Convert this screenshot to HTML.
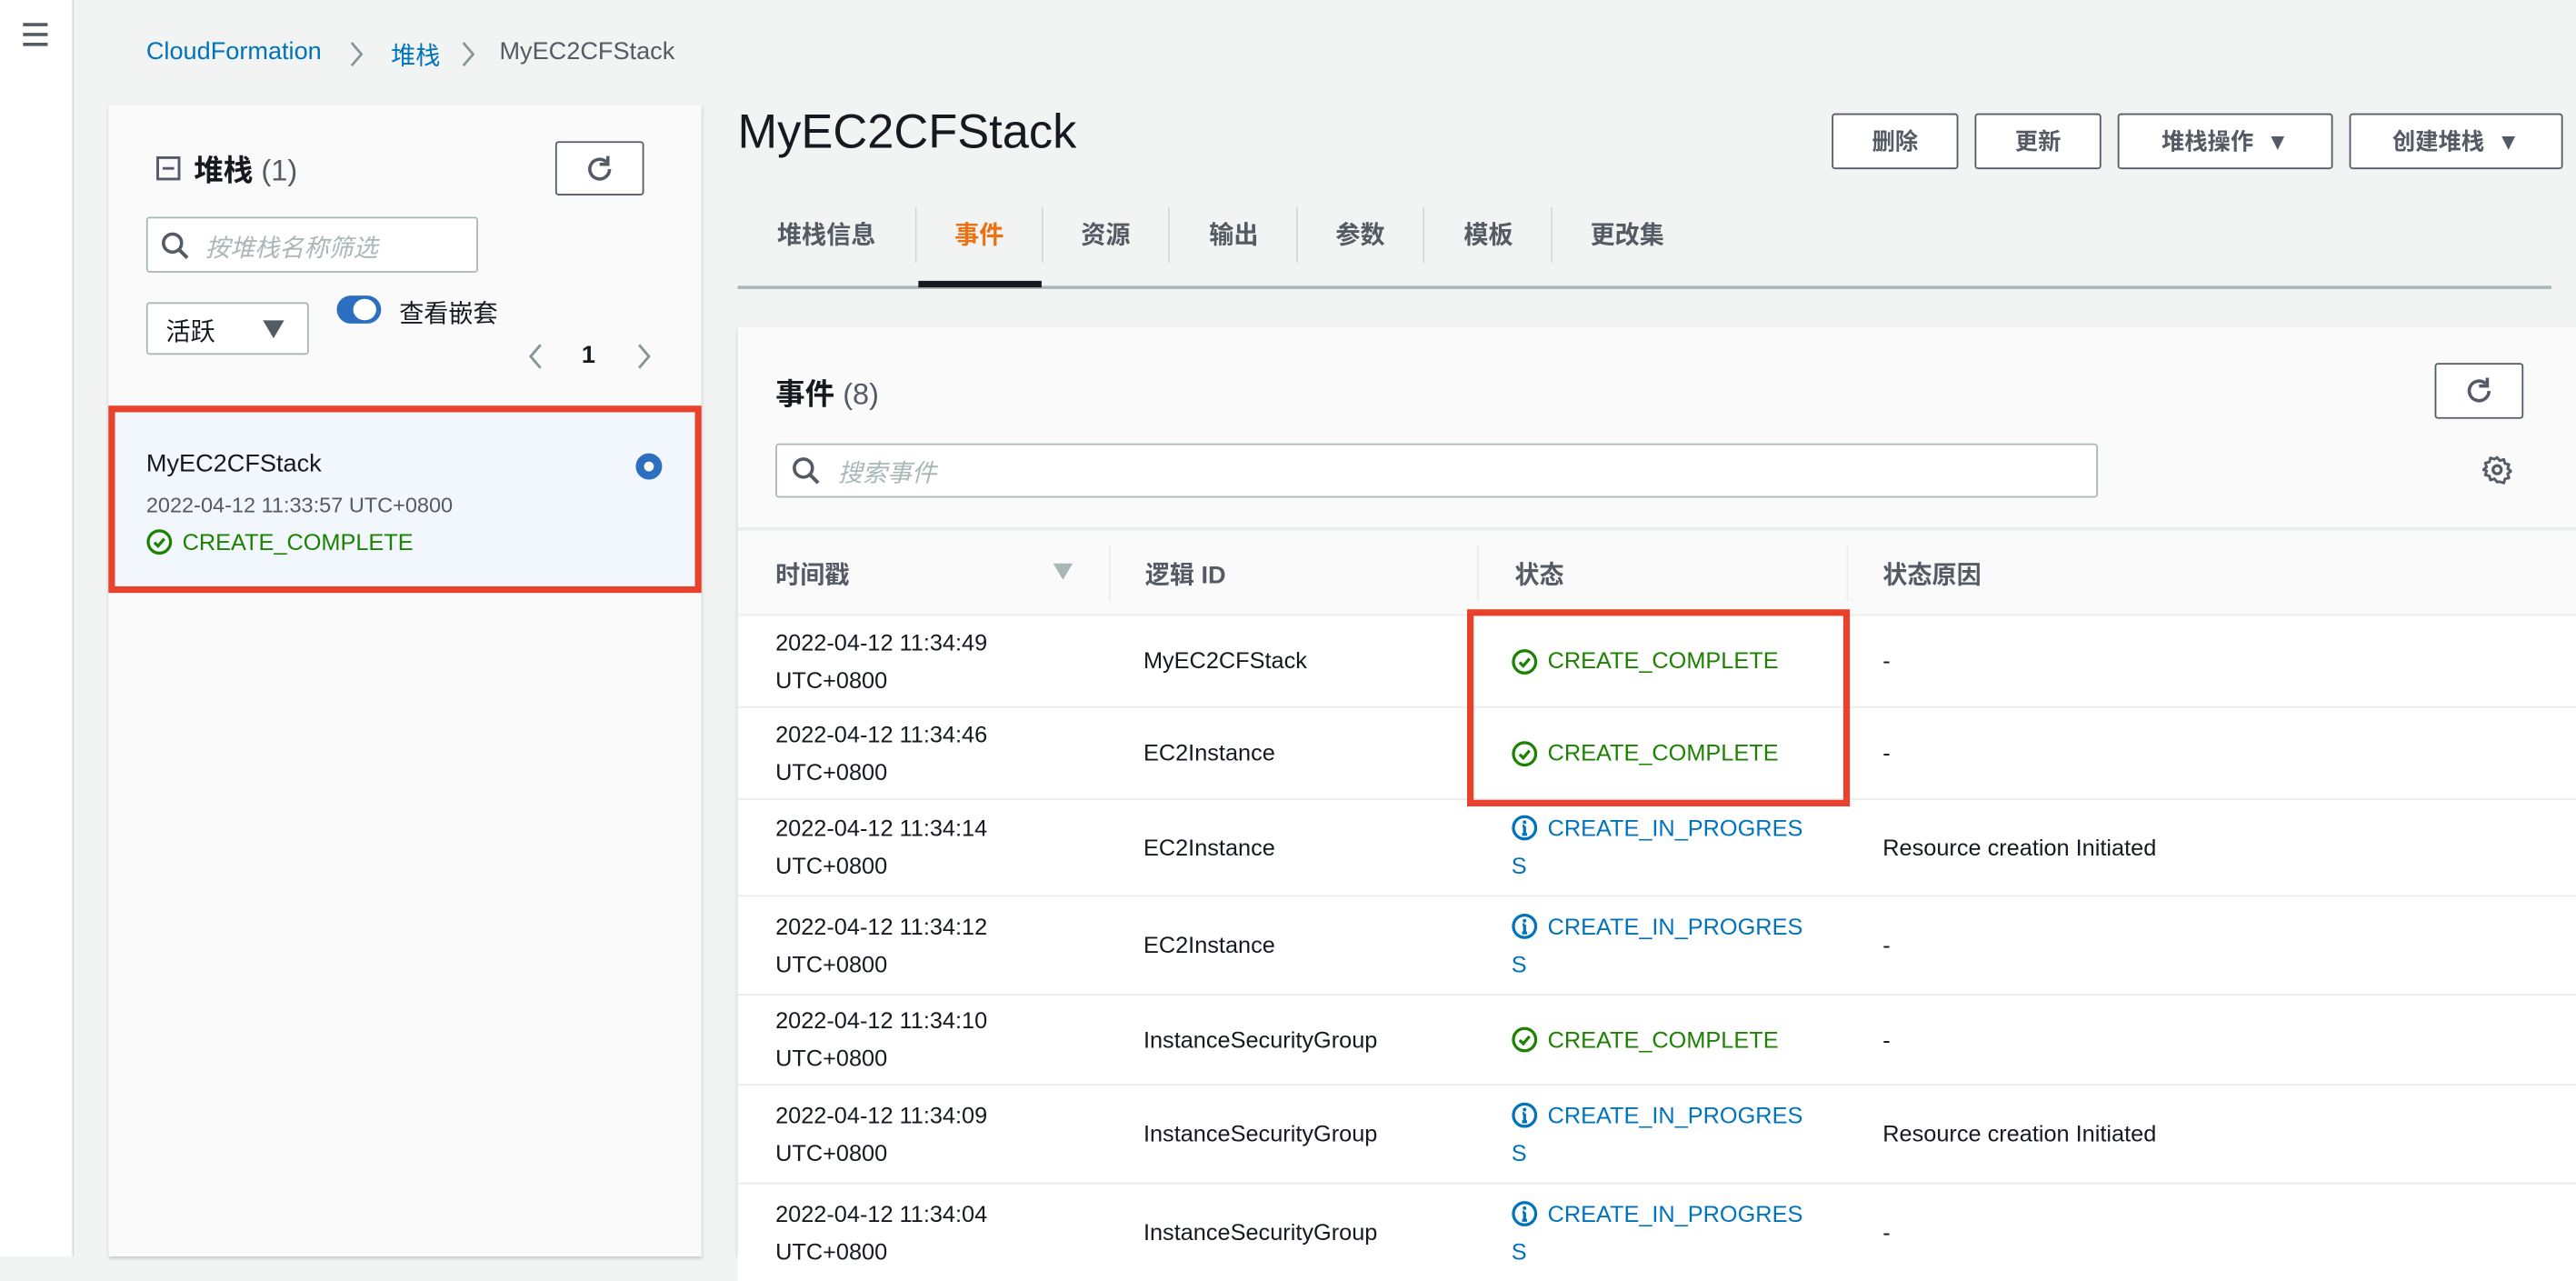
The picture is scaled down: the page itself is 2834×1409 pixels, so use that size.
<!DOCTYPE html>
<html><head><meta charset="utf-8">
<style>
*{box-sizing:border-box;margin:0;padding:0}
html,body{width:2834px;height:1382px;overflow:hidden;background:#f2f3f3}
#w{position:absolute;left:0;top:0;width:1568px;height:765px;transform:scale(1.8074,1.8065);transform-origin:0 0;font-family:"Liberation Sans","Noto Sans CJK SC",sans-serif;color:#16191f;background:#f2f3f3}
.a{position:absolute;white-space:nowrap}
.btn{position:absolute;border:1px solid #545b64;border-radius:2px;background:#fff;font-weight:bold;font-size:14px;color:#545b64;display:flex;align-items:center;justify-content:center}
.tab{position:absolute;top:132px;font-size:15px;font-weight:bold;color:#545b64}
.sep{position:absolute;top:126px;width:1px;height:34px;background:#d5dbdb}
.row{position:absolute;left:449px;width:1119px;background:#fff;border-top:1px solid #eaeded}
.c{position:absolute;top:0;bottom:0;display:flex;align-items:center;font-size:14px;line-height:23px;white-space:nowrap}
.g{color:#1d8102}.b{color:#0073bb}
.ic{width:16px;height:16px;margin-right:6px;flex:none}
</style></head><body><div id="w">
<div class="a" style="left:0;top:0;width:45px;height:765px;background:#fff;border-right:1px solid #d5dbdb"></div>
<svg class="a" style="left:13px;top:13px" width="18" height="16"><path d="M1 2h15M1 8h15M1 14h15" stroke="#545b64" stroke-width="2"/></svg>
<div class="a" style="left:89px;top:23px;font-size:15px;color:#0073bb">CloudFormation</div>
<svg class="a" style="left:212px;top:25px" width="10" height="16"><path d="M2 1l6 7-6 7" fill="none" stroke="#879596" stroke-width="1.5"/></svg>
<div class="a" style="left:238px;top:23px;font-size:15px;color:#0073bb">堆栈</div>
<svg class="a" style="left:280px;top:25px" width="10" height="16"><path d="M2 1l6 7-6 7" fill="none" stroke="#879596" stroke-width="1.5"/></svg>
<div class="a" style="left:304px;top:23px;font-size:15px;color:#545b64">MyEC2CFStack</div>

<div class="a" style="left:66px;top:64px;width:361px;height:701px;background:#fafafa;box-shadow:0 1px 2px rgba(0,0,0,.2)"></div>
<svg class="a" style="left:95px;top:95px" width="15" height="15"><rect x="1" y="1" width="13" height="13" fill="none" stroke="#545b64" stroke-width="1.6"/><path d="M4 7.5h7" stroke="#545b64" stroke-width="1.6"/></svg>
<div class="a" style="left:118px;top:90px;font-size:18px;font-weight:bold">堆栈 <span style="font-weight:normal;color:#545b64">(1)</span></div>
<div class="btn" style="left:338px;top:86px;width:54px;height:33px"><svg width="20" height="20" viewBox="0 0 20 20"><path d="M16 10a6 6 0 1 1-2-4.5" fill="none" stroke="#545b64" stroke-width="2"/><path d="M15 2v5h-5" fill="none" stroke="#545b64" stroke-width="2"/></svg></div>
<div class="a" style="left:89px;top:132px;width:202px;height:34px;border:1px solid #aab7b8;border-radius:2px;background:#fff"></div>
<svg class="a" style="left:98px;top:141px" width="18" height="18"><circle cx="7" cy="7" r="5.5" fill="none" stroke="#545b64" stroke-width="2"/><path d="M11 11l5 5" stroke="#545b64" stroke-width="2.2"/></svg>
<div class="a" style="left:125px;top:140px;font-size:15px;color:#aab7b8;font-style:italic">按堆栈名称筛选</div>
<div class="a" style="left:89px;top:184px;width:99px;height:32px;border:1px solid #aab7b8;border-radius:2px;background:#fff"></div>
<div class="a" style="left:101px;top:191px;font-size:15px">活跃</div>
<svg class="a" style="left:160px;top:195px" width="13" height="11"><path d="M0 0h13L6.5 11z" fill="#545b64"/></svg>
<div class="a" style="left:205px;top:180px;width:27px;height:17px;border-radius:9px;background:#2c6fc1"></div>
<div class="a" style="left:215px;top:182px;width:14px;height:13px;border-radius:50%;background:#fff"></div>
<div class="a" style="left:243px;top:180px;font-size:15px">查看嵌套</div>
<svg class="a" style="left:320px;top:208px" width="12" height="18"><path d="M9 2L3 9l6 7" fill="none" stroke="#879596" stroke-width="1.6"/></svg>
<div class="a" style="left:354px;top:208px;font-size:15px;font-weight:bold">1</div>
<svg class="a" style="left:386px;top:208px" width="12" height="18"><path d="M3 2l6 7-6 7" fill="none" stroke="#879596" stroke-width="1.6"/></svg>

<div class="a" style="left:66px;top:247px;width:361px;height:114px;background:#f1f7fc;border:4px solid #e8412c"></div>
<div class="a" style="left:89px;top:274px;font-size:15px">MyEC2CFStack</div>
<div class="a" style="left:89px;top:300px;font-size:13px;color:#545b64">2022-04-12 11:33:57 UTC+0800</div>
<div class="a" style="left:89px;top:322px;font-size:14px;display:flex;align-items:center" ><svg class="ic" viewBox="0 0 16 16"><circle cx="8" cy="8" r="6.8" fill="none" stroke="#1d8102" stroke-width="1.8"/><path d="M5 8.3l2.2 2.2L11 6" fill="none" stroke="#1d8102" stroke-width="1.8"/></svg><span class="g">CREATE_COMPLETE</span></div>
<div class="a" style="left:387px;top:276px;width:16px;height:16px;border-radius:50%;border:5px solid #2c6fc1;background:#fff"></div>

<div class="a" style="left:449px;top:65px;font-size:29px">MyEC2CFStack</div>
<div class="btn" style="left:1115px;top:69px;width:77px;height:34px">删除</div>
<div class="btn" style="left:1202px;top:69px;width:77px;height:34px">更新</div>
<div class="btn" style="left:1289px;top:69px;width:131px;height:34px">堆栈操作&nbsp;&nbsp;▼</div>
<div class="btn" style="left:1430px;top:69px;width:130px;height:34px">创建堆栈&nbsp;&nbsp;▼</div>

<div class="tab" style="left:473px">堆栈信息</div><div class="sep" style="left:557px"></div>
<div class="tab" style="left:581px;color:#ec7211">事件</div><div class="sep" style="left:634px"></div>
<div class="tab" style="left:658px">资源</div><div class="sep" style="left:711px"></div>
<div class="tab" style="left:736px">输出</div><div class="sep" style="left:789px"></div>
<div class="tab" style="left:813px">参数</div><div class="sep" style="left:866px"></div>
<div class="tab" style="left:891px">模板</div><div class="sep" style="left:944px"></div>
<div class="tab" style="left:968px">更改集</div>
<div class="a" style="left:449px;top:174px;width:1104px;height:2px;background:#aab7b8"></div>
<div class="a" style="left:559px;top:171px;width:75px;height:4px;background:#16191f"></div>

<div class="a" style="left:449px;top:199px;width:1119px;height:566px;background:#fafafa;box-shadow:0 1px 2px rgba(0,0,0,.2)"></div>
<div class="a" style="left:472px;top:226px;font-size:18px;font-weight:bold">事件 <span style="font-weight:normal;color:#545b64">(8)</span></div>
<div class="btn" style="left:1482px;top:221px;width:54px;height:34px"><svg width="20" height="20" viewBox="0 0 20 20"><path d="M16 10a6 6 0 1 1-2-4.5" fill="none" stroke="#545b64" stroke-width="2"/><path d="M15 2v5h-5" fill="none" stroke="#545b64" stroke-width="2"/></svg></div>
<div class="a" style="left:472px;top:270px;width:805px;height:33px;border:1px solid #aab7b8;border-radius:2px;background:#fff"></div>
<svg class="a" style="left:482px;top:278px" width="18" height="18"><circle cx="7" cy="7" r="5.5" fill="none" stroke="#545b64" stroke-width="2"/><path d="M11 11l5 5" stroke="#545b64" stroke-width="2.2"/></svg>
<div class="a" style="left:510px;top:277px;font-size:15px;color:#aab7b8;font-style:italic">搜索事件</div>
<svg class="a" style="left:1511px;top:277px" width="18" height="18" viewBox="0 0 18 18"><circle cx="9" cy="9" r="2.5" fill="none" stroke="#545b64" stroke-width="1.8"/><path d="M9 1.5l1.6 2 2.5-.8.6 2.5 2.5.6-.8 2.5 2 1.6-2 1.6.8 2.5-2.5.6-.6 2.5-2.5-.8L9 16.5l-1.6-2-2.5.8-.6-2.5-2.5-.6.8-2.5L.6 9l2-1.6-.8-2.5 2.5-.6.6-2.5 2.5.8z" fill="none" stroke="#545b64" stroke-width="1.6" stroke-linejoin="round"/></svg>
<div class="a" style="left:449px;top:321px;width:1119px;height:2px;background:#eaeded"></div>
<div class="a" style="left:472px;top:339px;font-size:15px;font-weight:bold;color:#545b64">时间戳</div>
<svg class="a" style="left:641px;top:343px" width="12" height="10"><path d="M0 0h12L6 10z" fill="#aab7b8"/></svg>
<div class="a" style="left:675px;top:332px;width:1px;height:34px;background:#eaeded"></div>
<div class="a" style="left:697px;top:339px;font-size:15px;font-weight:bold;color:#545b64">逻辑 ID</div>
<div class="a" style="left:899px;top:332px;width:1px;height:34px;background:#eaeded"></div>
<div class="a" style="left:922px;top:339px;font-size:15px;font-weight:bold;color:#545b64">状态</div>
<div class="a" style="left:1124px;top:332px;width:1px;height:34px;background:#eaeded"></div>
<div class="a" style="left:1146px;top:339px;font-size:15px;font-weight:bold;color:#545b64">状态原因</div>

<!-- rows -->
<div class="row" style="top:374px;height:56px"><div class="c" style="left:23px">2022-04-12 11:34:49<br>UTC+0800</div><div class="c" style="left:247px">MyEC2CFStack</div><div class="c g" style="left:471px"><svg class="ic" viewBox="0 0 16 16"><circle cx="8" cy="8" r="6.8" fill="none" stroke="#1d8102" stroke-width="1.8"/><path d="M5 8.3l2.2 2.2L11 6" fill="none" stroke="#1d8102" stroke-width="1.8"/></svg>CREATE_COMPLETE</div><div class="c" style="left:697px">-</div></div>
<div class="row" style="top:430px;height:56px"><div class="c" style="left:23px">2022-04-12 11:34:46<br>UTC+0800</div><div class="c" style="left:247px">EC2Instance</div><div class="c g" style="left:471px"><svg class="ic" viewBox="0 0 16 16"><circle cx="8" cy="8" r="6.8" fill="none" stroke="#1d8102" stroke-width="1.8"/><path d="M5 8.3l2.2 2.2L11 6" fill="none" stroke="#1d8102" stroke-width="1.8"/></svg>CREATE_COMPLETE</div><div class="c" style="left:697px">-</div></div>
<div class="row" style="top:486px;height:59px"><div class="c" style="left:23px">2022-04-12 11:34:14<br>UTC+0800</div><div class="c" style="left:247px">EC2Instance</div><div class="c b" style="left:471px;align-items:flex-start;padding-top:6px"><svg class="ic" style="margin-top:3px" viewBox="0 0 16 16"><circle cx="8" cy="8" r="6.8" fill="none" stroke="#0073bb" stroke-width="1.8"/><path d="M8 7v5M6.5 12h3M6.8 7H8" stroke="#0073bb" stroke-width="1.8"/><circle cx="8" cy="4.6" r="1.1" fill="#0073bb"/></svg><span style="margin-left:-22px;padding-left:22px;text-indent:0">CREATE_IN_PROGRES<br><span style="margin-left:-22px">S</span></span></div><div class="c" style="left:697px">Resource creation Initiated</div></div>
<div class="row" style="top:545px;height:60px"><div class="c" style="left:23px">2022-04-12 11:34:12<br>UTC+0800</div><div class="c" style="left:247px">EC2Instance</div><div class="c b" style="left:471px;align-items:flex-start;padding-top:7px"><svg class="ic" style="margin-top:3px" viewBox="0 0 16 16"><circle cx="8" cy="8" r="6.8" fill="none" stroke="#0073bb" stroke-width="1.8"/><path d="M8 7v5M6.5 12h3M6.8 7H8" stroke="#0073bb" stroke-width="1.8"/><circle cx="8" cy="4.6" r="1.1" fill="#0073bb"/></svg><span style="margin-left:-22px;padding-left:22px">CREATE_IN_PROGRES<br><span style="margin-left:-22px">S</span></span></div><div class="c" style="left:697px">-</div></div>
<div class="row" style="top:605px;height:55px"><div class="c" style="left:23px">2022-04-12 11:34:10<br>UTC+0800</div><div class="c" style="left:247px">InstanceSecurityGroup</div><div class="c g" style="left:471px"><svg class="ic" viewBox="0 0 16 16"><circle cx="8" cy="8" r="6.8" fill="none" stroke="#1d8102" stroke-width="1.8"/><path d="M5 8.3l2.2 2.2L11 6" fill="none" stroke="#1d8102" stroke-width="1.8"/></svg>CREATE_COMPLETE</div><div class="c" style="left:697px">-</div></div>
<div class="row" style="top:660px;height:60px"><div class="c" style="left:23px">2022-04-12 11:34:09<br>UTC+0800</div><div class="c" style="left:247px">InstanceSecurityGroup</div><div class="c b" style="left:471px;align-items:flex-start;padding-top:7px"><svg class="ic" style="margin-top:3px" viewBox="0 0 16 16"><circle cx="8" cy="8" r="6.8" fill="none" stroke="#0073bb" stroke-width="1.8"/><path d="M8 7v5M6.5 12h3M6.8 7H8" stroke="#0073bb" stroke-width="1.8"/><circle cx="8" cy="4.6" r="1.1" fill="#0073bb"/></svg><span style="margin-left:-22px;padding-left:22px">CREATE_IN_PROGRES<br><span style="margin-left:-22px">S</span></span></div><div class="c" style="left:697px">Resource creation Initiated</div></div>
<div class="row" style="top:720px;height:60px"><div class="c" style="left:23px">2022-04-12 11:34:04<br>UTC+0800</div><div class="c" style="left:247px">InstanceSecurityGroup</div><div class="c b" style="left:471px;align-items:flex-start;padding-top:7px"><svg class="ic" style="margin-top:3px" viewBox="0 0 16 16"><circle cx="8" cy="8" r="6.8" fill="none" stroke="#0073bb" stroke-width="1.8"/><path d="M8 7v5M6.5 12h3M6.8 7H8" stroke="#0073bb" stroke-width="1.8"/><circle cx="8" cy="4.6" r="1.1" fill="#0073bb"/></svg><span style="margin-left:-22px;padding-left:22px">CREATE_IN_PROGRES<br><span style="margin-left:-22px">S</span></span></div><div class="c" style="left:697px">-</div></div>

<div class="a" style="left:893px;top:371px;width:233px;height:120px;border:4px solid #e8412c"></div>
</div></body></html>
